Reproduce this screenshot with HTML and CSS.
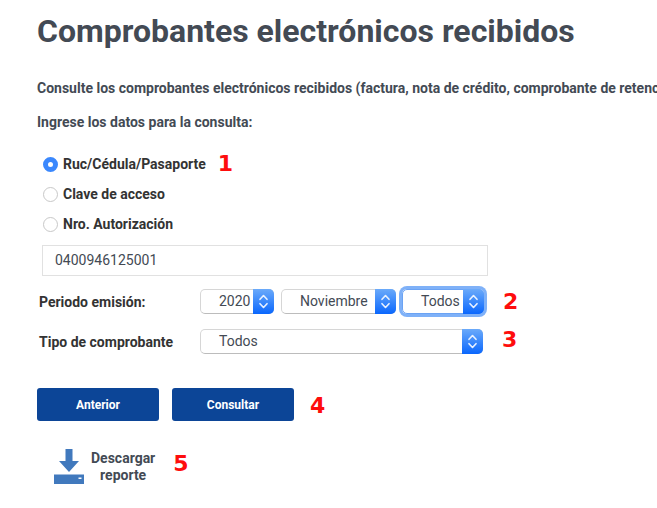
FILE: index.html
```html
<!DOCTYPE html>
<html lang="es">
<head>
<meta charset="utf-8">
<title>Comprobantes electrónicos recibidos</title>
<link rel="stylesheet" href="styles.css">
</head>
<body>
<main>
  <h1><span>Comprobantes electrónicos recibidos</span></h1>
  <p class="intro"><span>Consulte los comprobantes electrónicos recibidos (factura, nota de crédito, comprobante de retenc</span></p>
  <p><span>Ingrese los datos para la consulta:</span></p>
  <div class="options">
    <div class="option"><i class="radio on"></i><span>Ruc/Cédula/Pasaporte</span><b class="mark">1</b></div>
    <div class="option"><i class="radio"></i><span>Clave de acceso</span></div>
    <div class="option"><i class="radio"></i><span>Nro. Autorización</span></div>
  </div>
  <div class="field">0400946125001</div>
  <div class="row">
    <span class="label">Periodo emisión:</span>
    <div class="select year"><span>2020</span><svg class="arrows" viewBox="0 0 21 25"><path d="M7 10.300l3.500-3.800L14 10.300M7 14.700l3.500 3.800 3.500-3.800"/></svg></div>
    <div class="select month"><span>Noviembre</span><svg class="arrows" viewBox="0 0 21 25"><path d="M7 10.300l3.500-3.800L14 10.300M7 14.700l3.500 3.800 3.500-3.800"/></svg></div>
    <div class="select day"><span>Todos</span><svg class="arrows" viewBox="0 0 21 25"><path d="M7 10.300l3.500-3.800L14 10.300M7 14.700l3.500 3.800 3.500-3.800"/></svg></div>
    <b class="mark">2</b>
  </div>
  <div class="row">
    <span class="label">Tipo de comprobante</span>
    <div class="select type"><span>Todos</span><svg class="arrows" viewBox="0 0 21 25"><path d="M7 10.300l3.500-3.800L14 10.300M7 14.700l3.500 3.800 3.500-3.800"/></svg></div>
    <b class="mark">3</b>
  </div>
  <div class="actions">
    <div class="button">Anterior</div>
    <div class="button">Consultar</div>
    <b class="mark">4</b>
  </div>
  <div class="download">
    <svg class="icon" viewBox="0 0 30 36"><path d="M11.500 0h7v12H25L15 23 5 12h6.500zM0 25.500h30V35H0z"/><path class="light" d="M24.500 28.500h3v1.500h-3z"/></svg>
    <span class="caption">Descargar<br>reporte</span>
    <b class="mark">5</b>
  </div>
</main>
</body>
</html>
```
FILE: styles.css
```css
* { box-sizing: border-box; }
body {
  margin: 0;
  background: #fff;
  color: #434a54;
  font: 700 14px/17px Roboto, sans-serif;
  overflow: hidden;
}
main { padding-left: 37px; }
h1 { margin: 0 0 9px; font-size: 32px; line-height: 62px; white-space: nowrap; }
p { margin: 0; line-height: 34px; white-space: nowrap; }
.options { padding: 10px 0 6px 6px; color: #333; }
.option { display: flex; align-items: center; height: 30px; }
.radio {
  width: 15px;
  height: 15px;
  margin-right: 5px;
  border: 1.5px solid #c8c8c8;
  border-radius: 50%;
  background: #fff;
}
.radio.on { border: 5px solid #3b88fd; }
.mark {
  color: #fe0d0d;
  font: 700 22px/24px "DejaVu Sans", sans-serif;
}
.option .mark { margin-left: 12px; }
.field {
  width: 446px;
  height: 31px;
  margin-left: 5px;
  padding-left: 12px;
  border: 1px solid #e1e1e1;
  font-weight: 400;
  line-height: 29px;
}
.row { display: flex; align-items: center; height: 40px; padding-left: 2px; }
.field + .row { margin-top: 5px; }
.label { width: 161px; padding-top: 2px; color: #333; }
.select {
  display: flex;
  justify-content: space-between;
  height: 25px;
  padding-left: 18px;
  border: 1px solid #d6d6d6;
  border-bottom-color: #bcbcbc;
  border-radius: 5px;
  font-weight: 400;
  line-height: 23px;
}
.arrows {
  width: 21px;
  height: 25px;
  margin: -1px;
  border-radius: 0 5px 5px 0;
  background: linear-gradient(#6baafa, #0a67fd);
  fill: none;
  stroke: #e8f1ff;
  stroke-width: 1.600;
  stroke-linecap: round;
  stroke-linejoin: round;
}
.year { width: 74px; margin-right: 7px; }
.month { width: 115px; margin-right: 6px; }
.day { width: 82px; box-shadow: 0 0 0 3px #7fb1f8; border-color: #6ba3f4; }
.type { width: 283px; }
.row .mark { margin: 2px 0 0 19px; }
.type + .mark { margin-top: -2px; }
.actions { display: flex; align-items: center; gap: 13px; margin-top: 27px; }
.button {
  width: 122px;
  height: 33px;
  border-radius: 3px;
  background: #0c4597;
  color: #fff;
  font-size: 12px;
  line-height: 34px;
  text-align: center;
}
.actions .mark { margin: 2px 0 0 3px; }
.download { display: flex; margin: 28px 0 0 17px; }
.icon { width: 30px; height: 36px; margin-right: 7px; fill: #4179bd; }
.light { fill: #fff; }
.caption { margin-top: 1px; text-align: center; }
.download .mark { margin: 3px 0 0 18px; }
```
